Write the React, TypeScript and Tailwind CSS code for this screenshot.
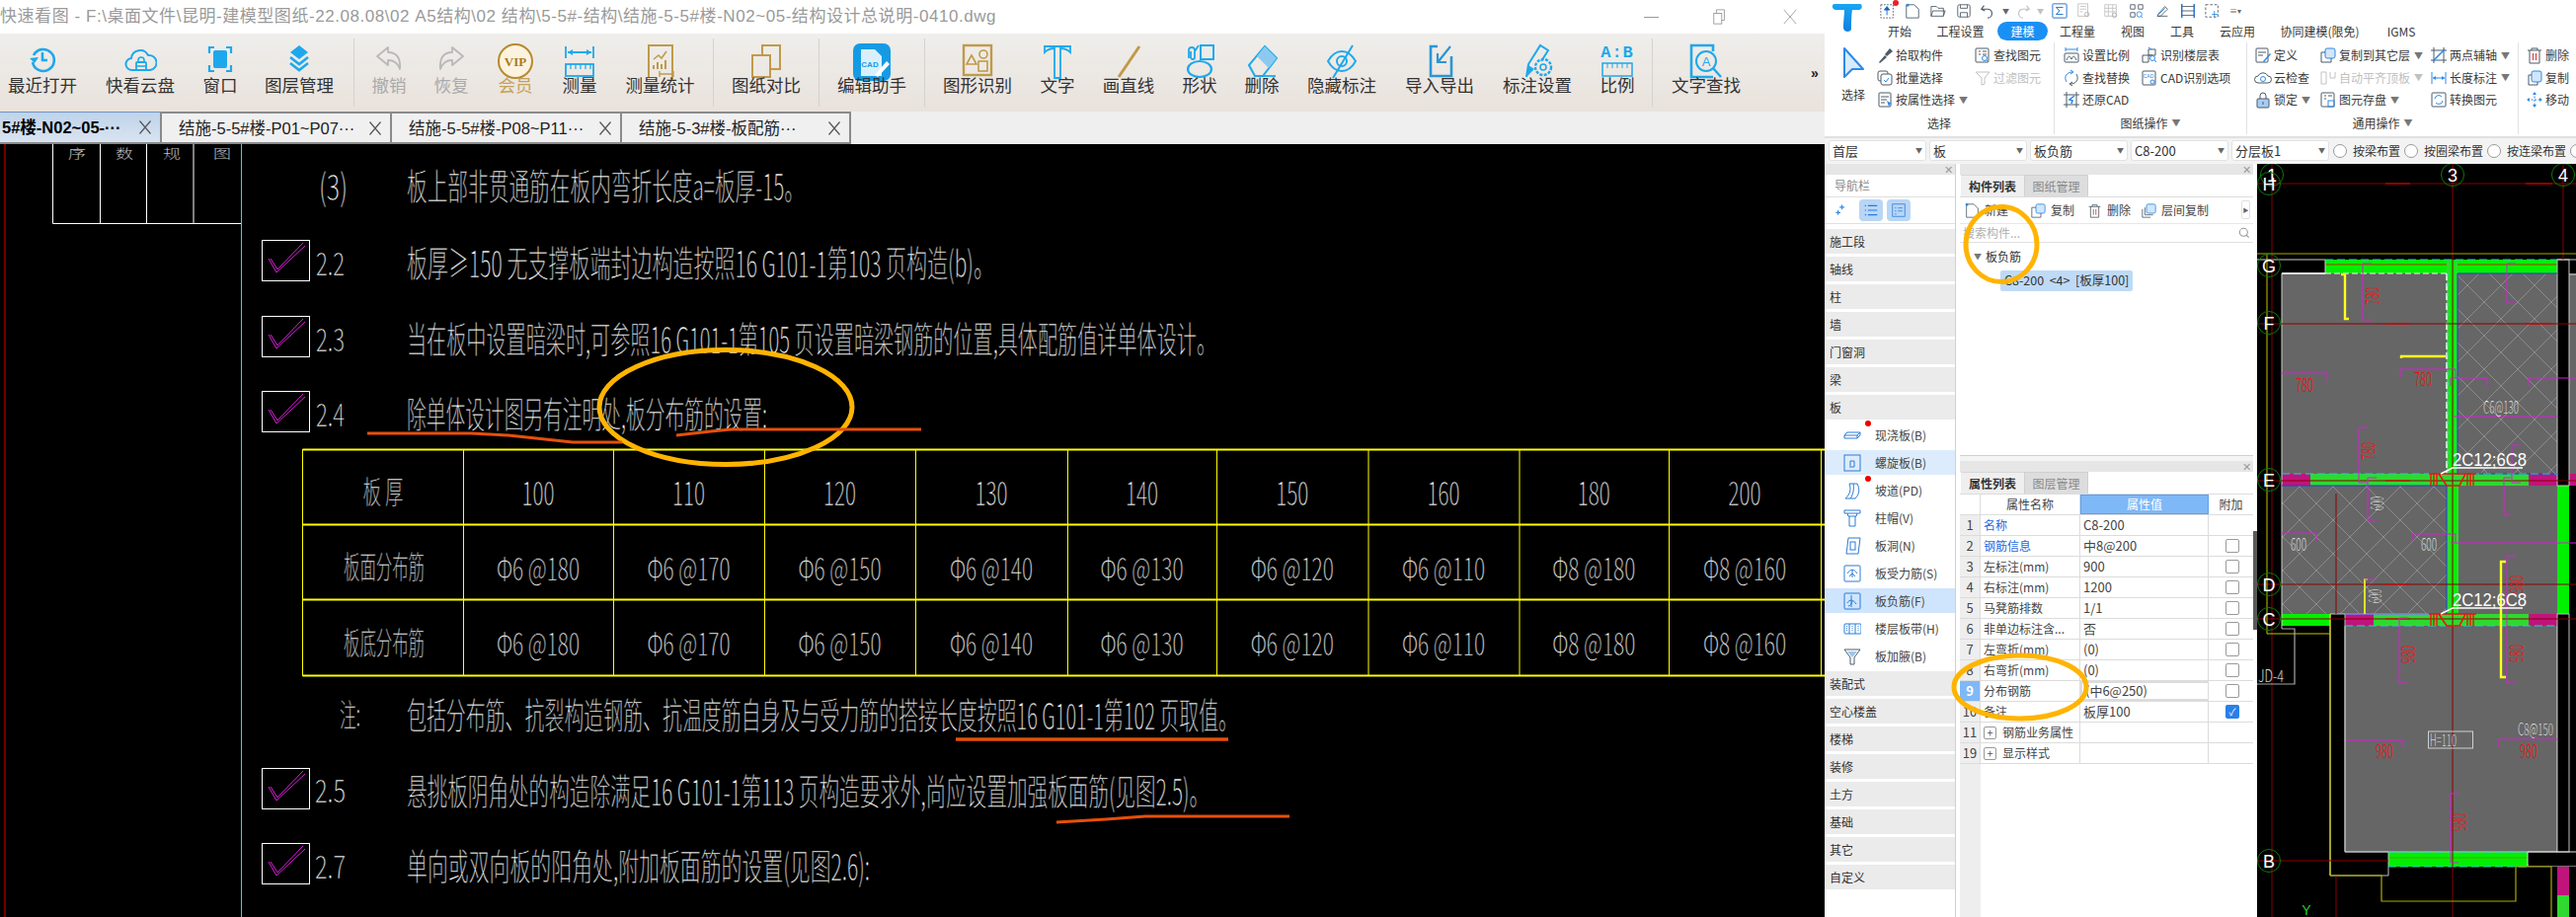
import React from "react";

const BL = "#1ea8ec";
const GD = "#c09a4a";
const ST = "#4d5b68";
const AC = "#2d8ae6";

function Svg({ w = 32, h = 32, vb = "0 0 32 32", children, className = "" }: { w?: number; h?: number; vb?: string; children: React.ReactNode; className?: string }) {
  return (
    <svg width={w} height={h} viewBox={vb} fill="none" className={"block shrink-0 " + className}>
      {children}
    </svg>
  );
}

const toolIcons: Record<string, React.ReactNode> = {
  recent: (
    <Svg>
      <path d="M7 12a11 11 0 1 1-1 7" stroke={BL} strokeWidth="2.6" />
      <path d="M3 15l5 5 4-6z" fill={BL} />
      <path d="M16 9v8h5" stroke={BL} strokeWidth="2.6" />
    </Svg>
  ),
  cloud: (
    <Svg w={34}>
      <path d="M8 27a6 6 0 0 1-1-12 9 9 0 0 1 17-3 7 7 0 0 1 2 15z" stroke={BL} strokeWidth="2" />
      <rect x="12" y="19" width="10" height="8" rx="1" stroke={BL} strokeWidth="1.8" />
      <path d="M14 19v-2a3 3 0 0 1 6 0v2M12 23h10" stroke={BL} strokeWidth="1.6" />
    </Svg>
  ),
  win: (
    <Svg>
      <path d="M5 10V4h5M22 4h5v6M27 22v6h-5M10 28H5v-6" stroke={BL} strokeWidth="2.2" />
      <rect x="9" y="7" width="14" height="18" rx="2" fill={BL} />
    </Svg>
  ),
  layer: (
    <Svg>
      <path d="M16 2l9 7-9 7-9-7z" fill={BL} />
      <path d="M7 14l9 7 9-7M7 20l9 7 9-7" stroke={BL} strokeWidth="2.6" />
    </Svg>
  ),
  undo: (
    <Svg>
      <path d="M4 13L15 4v5c9 0 13 6 12 17-2-6-6-9-12-9v5z" stroke="#b8b8b8" strokeWidth="1.8" strokeLinejoin="round" />
    </Svg>
  ),
  redo: (
    <Svg>
      <path d="M28 13L17 4v5C8 9 4 15 5 26c2-6 6-9 12-9v5z" stroke="#b8b8b8" strokeWidth="1.8" strokeLinejoin="round" />
    </Svg>
  ),
  vip: (
    <Svg w={38} h={36} vb="0 0 38 36">
      <ellipse cx="19" cy="18" rx="17" ry="17" fill="#fbf3df" stroke="#b88a2e" strokeWidth="2" />
      <text x="19" y="23" textAnchor="middle" fontSize="13" fontWeight="700" fontFamily="Liberation Serif, serif" fill="#a97a20">VIP</text>
    </Svg>
  ),
  measure: (
    <Svg w={32} h={36} vb="0 0 32 36">
      <path d="M2 3v12M30 3v12M4 9h24" stroke={BL} strokeWidth="1.8" />
      <path d="M4 9l5-3v6zM28 9l-5-3v6z" fill={BL} />
      <rect x="2" y="21" width="28" height="12" stroke={BL} strokeWidth="1.8" />
      <path d="M7 21v5M12 21v5M17 21v5M22 21v5M27 21v5" stroke={BL} strokeWidth="1.2" />
    </Svg>
  ),
  stat: (
    <Svg w={32} h={36} vb="0 0 32 36">
      <path d="M4 34V2h24v34" stroke={GD} strokeWidth="2" />
      <path d="M9 16l5-4 3 3 5-7" stroke={GD} strokeWidth="1.6" />
      <path d="M9 26v-4M13 26v-7M17 26v-5M21 26v-9" stroke={GD} strokeWidth="2" />
      <path d="M15 31h14M15 28v6M29 28v6" stroke={GD} strokeWidth="1.4" />
    </Svg>
  ),
  compare: (
    <Svg w={32} h={36} vb="0 0 32 36">
      <path d="M12 12V2h18v24H20" stroke={GD} strokeWidth="2" />
      <rect x="2" y="12" width="18" height="22" stroke={GD} strokeWidth="2" />
    </Svg>
  ),
  edit: (
    <Svg w={38} h={38} vb="0 0 38 38">
      <rect x="0" y="0" width="38" height="38" rx="7" fill="#159be4" />
      <path d="M8 6h14l7 7v20H8z" fill="#d9f0fc" />
      <text x="17" y="24" textAnchor="middle" fontSize="8" fontWeight="700" fontFamily="Liberation Sans, sans-serif" fill="#159be4">CAD</text>
      <path d="M22 32l12-14 3 3-12 13z" fill="#fff" />
    </Svg>
  ),
  shape: (
    <Svg h={34} vb="0 0 32 34">
      <rect x="2" y="2" width="28" height="30" stroke={GD} strokeWidth="2.4" />
      <path d="M10 12l-5 9h10z" stroke={GD} strokeWidth="1.6" />
      <ellipse cx="22" cy="11" rx="4" ry="4" stroke={GD} strokeWidth="1.6" />
      <rect x="17" y="18" width="9" height="10" stroke={GD} strokeWidth="1.6" />
    </Svg>
  ),
  text: (
    <Svg h={36} vb="0 0 32 36">
      <path d="M3 9V3h26v6C26 6 22 5 19 5v30h-6V5C10 5 6 6 3 9z" stroke={BL} strokeWidth="1.8" />
    </Svg>
  ),
  line: (
    <Svg h={36} vb="0 0 32 36">
      <path d="M27 3L6 34" stroke={GD} strokeWidth="3" />
    </Svg>
  ),
  form: (
    <Svg h={36} vb="0 0 32 36">
      <rect x="17" y="2" width="13" height="14" stroke={BL} strokeWidth="2" />
      <path d="M5 15V7a3 3 0 0 1 6 0v7a2 2 0 0 1-4 0V8M15 2L11 8" stroke={BL} strokeWidth="1.8" />
      <ellipse cx="16" cy="26" rx="12" ry="8" stroke={BL} strokeWidth="2.2" />
    </Svg>
  ),
  erase: (
    <Svg h={36} vb="0 0 32 36">
      <path d="M3 22L19 3l12 12-14 18H9z" stroke={BL} strokeWidth="2" />
      <path d="M19 3l12 12-8 10-12-12z" fill="#8cc9ee" />
      <path d="M9 33h21" stroke={BL} strokeWidth="1.8" />
    </Svg>
  ),
  eye: (
    <Svg h={36} vb="0 0 32 36">
      <path d="M2 18c4-7 9-10 14-10s10 3 14 10c-4 7-9 10-14 10S6 25 2 18z" stroke={BL} strokeWidth="2" />
      <ellipse cx="16" cy="18" rx="5" ry="5" stroke={BL} strokeWidth="2" />
      <path d="M27 2L7 35" stroke={BL} strokeWidth="2" />
    </Svg>
  ),
  port: (
    <Svg h={36} vb="0 0 32 36">
      <path d="M14 3H7v30h21V13" stroke="#2b95d6" strokeWidth="2.6" />
      <path d="M27 3L15 18M14 10v9h9" stroke="#2b95d6" strokeWidth="2.2" />
    </Svg>
  ),
  set: (
    <Svg h={36} vb="0 0 32 36">
      <path d="M5 34l2-13L19 2l8 5-7 11" stroke={BL} strokeWidth="2" />
      <path d="M5 34l2-12 6 4z" fill={BL} />
      <circle cx="22" cy="24" r="8" stroke={BL} strokeWidth="2.4" strokeDasharray="3 1.4" />
      <circle cx="22" cy="24" r="3" stroke={BL} strokeWidth="1.6" />
    </Svg>
  ),
  ratio: (
    <div className="flex flex-col items-center">
      <span className="font-['Liberation_Mono',monospace] text-[17px] leading-[19px] font-bold text-[#1ea8ec] tracking-[1px]">A:B</span>
      <Svg h={15} vb="0 0 32 15">
        <rect x="1" y="1" width="30" height="13" stroke={BL} strokeWidth="1.5" />
        <path d="M6 1v5M11 1v5M16 1v5M21 1v5M26 1v5" stroke={BL} />
      </Svg>
    </div>
  ),
  find: (
    <Svg w={34} h={36} vb="0 0 34 36">
      <path d="M24 34H2V2h22v6" stroke={BL} strokeWidth="2.6" />
      <circle cx="17" cy="18" r="10" stroke={BL} strokeWidth="2" />
      <path d="M24 25l8 9" stroke={BL} strokeWidth="2.4" />
      <text x="17" y="23" textAnchor="middle" fontSize="13" fontFamily="Liberation Sans, sans-serif" fill={BL}>A</text>
    </Svg>
  ),
};

type Tool = { label: string; w: string; icon: string; dim?: string };
const SEP: Tool = { label: "", w: "", icon: "" };
const tools: Tool[] = [
  { label: "最近打开", w: "w-[86px]", icon: "recent" },
  { label: "快看云盘", w: "w-[112px]", icon: "cloud" },
  { label: "窗口", w: "w-[50px]", icon: "win" },
  { label: "图层管理", w: "w-[110px]", icon: "layer" },
  SEP,
  { label: "撤销", w: "w-[70px]", icon: "undo", dim: "text-[#aaaaaa]" },
  { label: "恢复", w: "w-[56px]", icon: "redo", dim: "text-[#aaaaaa]" },
  { label: "会员", w: "w-[74px]", icon: "vip", dim: "text-[#c4a25a]" },
  { label: "测量", w: "w-[56px]", icon: "measure" },
  { label: "测量统计", w: "w-[107px]", icon: "stat" },
  SEP,
  { label: "图纸对比", w: "w-[106px]", icon: "compare" },
  SEP,
  { label: "编辑助手", w: "w-[106px]", icon: "edit" },
  SEP,
  { label: "图形识别", w: "w-[106px]", icon: "shape" },
  { label: "文字", w: "w-[56px]", icon: "text" },
  { label: "画直线", w: "w-[88px]", icon: "line" },
  { label: "形状", w: "w-[56px]", icon: "form" },
  { label: "删除", w: "w-[70px]", icon: "erase" },
  { label: "隐藏标注", w: "w-[92px]", icon: "eye" },
  { label: "导入导出", w: "w-[106px]", icon: "port" },
  { label: "标注设置", w: "w-[92px]", icon: "set" },
  { label: "比例", w: "w-[70px]", icon: "ratio" },
  SEP,
  { label: "文字查找", w: "w-[108px]", icon: "find" },
];

function Toolbar() {
  return (
    <div className="flex h-[79px] shrink-0 bg-gradient-to-b from-[#efeeeb] to-[#e9e2dc]">
      {tools.map((t, i) =>
        t.label === "" ? (
          <div key={i} className="w-px my-[5px] bg-[#d3d2ce] shrink-0" />
        ) : (
          <div key={i} className={"flex flex-col items-center shrink-0 pt-[10px] " + t.w}>
            <div className="h-[34px] flex items-start justify-center">{toolIcons[t.icon]}</div>
            <div className={"text-[17.5px] leading-[24px] mt-[-3px] whitespace-nowrap " + (t.dim ?? "text-[#333333]")}>{t.label}</div>
          </div>
        )
      )}
      <div className="ml-[52px] pt-[30px] text-[14px] font-bold text-[#222222]">»</div>
    </div>
  );
}

function DocTab({ text, active, w }: { text: string; active?: boolean; w: string }) {
  return (
    <div className={"flex items-center h-full shrink-0 border-r-2 border-b-2 border-[#8a8a8a] " + w + " " + (active ? "bg-gradient-to-b from-[#bfd3ea] to-[#d9e4f1] border-t border-t-[#6f93c4] pl-[2px]" : "border-t-2 bg-[#f0f0f0] pl-[17px]")}>
      <span className={"text-[16.5px] leading-[24px] whitespace-nowrap font-['Liberation_Sans','Noto_Sans_CJK_SC',sans-serif] flex-1 overflow-hidden " + (active ? "font-bold text-black" : "text-[#222222]")}>{text}</span>
      <span className="w-[30px] flex justify-center shrink-0">
        <Svg w={14} h={16} vb="0 0 14 16">
          <path d="M1.5 1.5L12.5 14.5M12.5 1.5L1.5 14.5" stroke="#555555" strokeWidth="1.2" />
        </Svg>
      </span>
    </div>
  );
}

function CT({ x, y, s, len, children, anchor, fill = "#ffffff", thin = 0.6, rot }: { x: number; y: number; s: number; len?: number; children: React.ReactNode; anchor?: "middle" | "start"; fill?: string; thin?: number; rot?: number }) {
  return (
    <text
      x={x}
      y={y}
      fontSize={s}
      fill={fill}
      stroke={thin ? "#000000" : "none"}
      strokeWidth={thin}
      textAnchor={anchor}
      textLength={len}
      lengthAdjust={len ? "spacingAndGlyphs" : undefined}
      transform={rot ? `rotate(${rot} ${x} ${y})` : undefined}
      fontFamily="'Noto Sans CJK SC', 'Liberation Sans', sans-serif"
      fontWeight={300}
    >
      {children}
    </text>
  );
}

function CheckBox({ y }: { y: number }) {
  return (
    <g>
      <rect x="265.5" y={y + 0.5} width="48" height="41" stroke="#ffffff" />
      <path d={`M272 ${y + 19}l8 14 29-27M274 ${y + 19}l7 11 26-27`} stroke="#e020e0" strokeWidth="1" fill="none" />
    </g>
  );
}

const colsX = [306, 469, 621, 774, 927, 1081, 1232, 1385.5, 1538.5, 1690, 1844];
const heads = ["100", "110", "120", "130", "140", "150", "160", "180", "200"];
const vals = ["Φ6 @180", "Φ6 @170", "Φ6 @150", "Φ6 @140", "Φ6 @130", "Φ6 @120", "Φ6 @110", "Φ8 @180", "Φ8 @160"];

function DocCanvas() {
  return (
    <svg viewBox="0 146 1848 783" className="block w-full h-full bg-black">
      <path d="M5 146V929" stroke="#e00000" strokeWidth="1" />
      <path d="M244.5 146V929" stroke="#20e0e0" strokeWidth="1" />
      <path d="M53.5 146V226.5H244M101.5 146V226M148.5 146V226M196 146V226" stroke="#ffffff" fill="none" />
      <CT x={78} y={160} s={13} len={18} anchor="middle" thin={0.2}>序</CT>
      <CT x={126} y={160} s={13} len={18} anchor="middle" thin={0.2}>数</CT>
      <CT x={174} y={160} s={13} len={18} anchor="middle" thin={0.2}>规</CT>
      <CT x={225} y={160} s={13} len={18} anchor="middle" thin={0.2}>图</CT>

      <CT x={323} y={203} s={37} len={29}>(3)</CT>
      <CT x={412} y={203} s={37} len={403}>板上部非贯通筋在板内弯折长度a=板厚-15。</CT>

      <CheckBox y={243} />
      <CT x={320} y={279} s={33} len={29}>2.2</CT>
      <CT x={412} y={281} s={37} len={595}>板厚≥150 无支撑板端封边构造按照16 G101-1第103 页构造(b)。</CT>

      <CheckBox y={320} />
      <CT x={320} y={356} s={33} len={29}>2.3</CT>
      <CT x={412} y={358} s={37} len={820}>当在板中设置暗梁时,可参照16 G101-1第105 页设置暗梁钢筋的位置,具体配筋值详单体设计。</CT>

      <CheckBox y={396} />
      <CT x={320} y={432} s={33} len={29}>2.4</CT>
      <CT x={412} y={434} s={37} len={365}>除单体设计图另有注明处,板分布筋的设置:</CT>

      <g stroke="#ffff00" fill="none">
        <path d="M306.5 455.5H1848M306.5 531.5H1848M306.5 607.5H1848M306.5 684.5H1848" strokeWidth="2" />
        {colsX.map((x) => (
          <path key={x} d={`M${x + 0.5} 455V685`} strokeWidth="1" />
        ))}
      </g>
      <CT x={388} y={510} s={32} len={41} anchor="middle">板 厚</CT>
      {heads.map((h, i) => (
        <CT key={h} x={(colsX[i + 1] + colsX[i + 2]) / 2} y={512} s={34} len={33} anchor="middle">{h}</CT>
      ))}
      <CT x={389} y={586} s={32} len={82} anchor="middle">板面分布筋</CT>
      <CT x={389} y={663} s={32} len={82} anchor="middle">板底分布筋</CT>
      {vals.map((v, i) => (
        <React.Fragment key={i}>
          <CT x={(colsX[i + 1] + colsX[i + 2]) / 2} y={588} s={32} len={84} anchor="middle">{v}</CT>
          <CT x={(colsX[i + 1] + colsX[i + 2]) / 2} y={664} s={32} len={84} anchor="middle">{v}</CT>
        </React.Fragment>
      ))}
      <CT x={344} y={736} s={32} len={21}>注:</CT>
      <CT x={412} y={739} s={37} len={842}>包括分布筋、抗裂构造钢筋、抗温度筋自身及与受力筋的搭接长度按照16 G101-1第102 页取值。</CT>

      <CheckBox y={778} />
      <CT x={319} y={813} s={33} len={31}>2.5</CT>
      <CT x={412} y={816} s={37} len={813}>悬挑板阴角处的构造除满足16 G101-1第113 页构造要求外,尚应设置加强板面筋(见图2.5)。</CT>

      <CheckBox y={854} />
      <CT x={319} y={890} s={33} len={31}>2.7</CT>
      <CT x={412} y={892} s={37} len={469}>单向或双向板的阳角处,附加板面筋的设置(见图2.6):</CT>
    </svg>
  );
}

function Bracket({ d, c = "#d81ed8" }: { d: string; c?: string }) {
  return <path d={d} stroke={c} strokeWidth="1" fill="none" />;
}

function RedBars({ y }: { y: number }) {
  return (
    <g stroke="#f01010" fill="none" strokeWidth="1.4">
      <path d={`M2460 ${y}H2508M2462 ${y}V${y + 12}M2465 ${y}V${y + 12}M2468 ${y}V${y + 12}M2499 ${y}V${y + 12}M2502 ${y}V${y + 12}M2505 ${y}V${y + 12}`} />
      <path d={`M2470 ${y}L2478 ${y + 12}H2491L2497 ${y}`} strokeWidth="1.6" />
      <path d={`M2472 ${y}L2484 ${y - 6}H2555`} stroke="#ffffff" strokeWidth="1.4" />
    </g>
  );
}

function CadCanvas() {
  const bubbles: [string, number, number][] = [
    ["1", 2301, 177], ["3", 2484, 177], ["4", 2596, 177],
    ["H", 2298, 186], ["G", 2298, 269], ["F", 2298, 327],
    ["E", 2298, 486], ["D", 2298, 592], ["C", 2298, 627], ["B", 2298, 872],
  ];
  const g1 = "#00f000";
  const g2 = "#2fd92f";
  const pk = "#c0147d";
  return (
    <svg viewBox="2286 166 323 763" className="block w-full h-full bg-black">
      <defs>
        <pattern id="hatch" width="34" height="34" patternUnits="userSpaceOnUse">
          <path d="M0 0L34 34M34 0L0 34" stroke="#969696" strokeWidth="0.8" />
        </pattern>
      </defs>

      {/* slabs */}
      <rect x="2311" y="277" width="167" height="203" fill="#666666" />
      <rect x="2489" y="277" width="101" height="203" fill="#666666" />
      <rect x="2489" y="277" width="101" height="203" fill="url(#hatch)" />
      <rect x="2602" y="277" width="7" height="203" fill="#666666" />
      <rect x="2311" y="492" width="167" height="130" fill="#666666" />
      <rect x="2311" y="492" width="167" height="130" fill="url(#hatch)" />
      <rect x="2490" y="492" width="100" height="130" fill="#666666" />
      <rect x="2375" y="634" width="215" height="229" fill="#666666" />

      {/* green beams */}
      <rect x="2355" y="263" width="235" height="14" fill={g1} />
      <path d="M2355 268H2590" stroke="#6d7a00" strokeWidth="1.5" />
      <rect x="2478" y="263" width="11" height="229" fill={g2} />
      <rect x="2481" y="263" width="5" height="229" fill={g1} />
      <rect x="2311" y="480" width="291" height="12" fill={g2} />
      <rect x="2311" y="480" width="29" height="12" fill={pk} />
      <rect x="2561" y="480" width="48" height="12" fill={pk} />
      <rect x="2478" y="492" width="12" height="142" fill={g2} />
      <rect x="2482" y="492" width="6" height="142" fill={g1} />
      <rect x="2590" y="492" width="12" height="142" fill={g1} />
      <rect x="2311" y="622" width="49" height="12" fill={g1} />
      <rect x="2375" y="622" width="215" height="12" fill={g2} />
      <rect x="2375" y="622" width="29" height="12" fill={pk} />
      <rect x="2561" y="622" width="29" height="12" fill={pk} />
      <rect x="2419" y="863" width="141" height="15" fill={g1} />
      <path d="M2419 869H2560" stroke="#59a000" strokeWidth="1" />
      <rect x="2590" y="878" width="12" height="29" fill={pk} />
      <rect x="2590" y="907" width="12" height="22" fill={g2} />

      {/* black columns and outlines */}
      <path d="M2286 263H2355V277H2311V637" stroke="#cfcfcf" strokeWidth="1" fill="none" />
      <path d="M2311 277H2355" stroke="#ffffff" strokeWidth="1.5" />
      <rect x="2590" y="263" width="12" height="229" fill="#000000" stroke="#c8c8c8" strokeWidth="1" />
      <path d="M2590 263H2609" stroke="#c8c8c8" />
      <path d="M2602 278H2609" stroke="#c8c8c8" />
      <path d="M2360 622H2375V863H2419V887H2360Z" fill="#000000" stroke="#c0c0c0" strokeWidth="1" />
      <path d="M2375 634V863H2590V634" stroke="#c0c0c0" fill="none" />
      <rect x="2590" y="622" width="12" height="241" fill="#000000" stroke="#c0c0c0" strokeWidth="1" />
      <path d="M2560 863V877H2609M2560 863H2609" stroke="#e0e0e0" fill="none" />
      <rect x="2561" y="864" width="48" height="13" fill="#000000" />
      <path d="M2360 622V887" stroke="#e4e400" />

      {/* blue and cyan edges */}
      <path d="M2489 480V277H2590M2489 480H2590" stroke="#1c3fd0" strokeWidth="1" fill="none" />
      <path d="M2311 492H2478V622" stroke="#1c3fd0" strokeWidth="1" fill="none" />
      <path d="M2375 622H2460" stroke="#7d7df0" strokeWidth="1.5" />
      <path d="M2355 263H2590" stroke="#20d0d0" strokeWidth="1" strokeDasharray="8 4" />
      <path d="M2478 277V480" stroke="#ffffff" strokeWidth="1.4" strokeDasharray="7 3" />
      <path d="M2479 277V480" stroke="#30e0e0" strokeWidth="1" strokeDasharray="3 7" />
      <path d="M2355 277H2478" stroke="#ffffff" strokeWidth="1" strokeDasharray="6 3" />
      <path d="M2311 480H2590M2375 634H2590M2419 863H2560M2419 878H2560" stroke="#20d0d0" strokeWidth="1" strokeDasharray="8 4" />

      {/* axes */}
      <path d="M2286 186H2609M2286 328H2609M2286 487H2609M2286 592H2609M2286 627H2609M2286 872H2419" stroke="#8a0000" strokeWidth="1" />
      <path d="M2301 166V929M2484 166V929M2596 166V263" stroke="#8a0000" strokeWidth="1" />
      <path d="M2366 500V622M2366 887V929" stroke="#8a0000" strokeWidth="1" />
      <path d="M2416 186H2441M2558 186H2585M2416 328H2441M2558 328H2585M2416 487H2441M2416 592H2441M2416 627H2441" stroke="#e00000" strokeWidth="1" />

      {/* yellow outlines */}
      <path d="M2286 257H2609" stroke="#aaaa00" strokeWidth="1" />
      <path d="M2296 257V642H2360" stroke="#c4c400" strokeWidth="1" fill="none" />
      <path d="M2360 887H2412V913H2548V878H2584V929" stroke="#aaaa00" strokeWidth="1.2" fill="none" />
      <path d="M2311 637H2324V693H2286" stroke="#a8a8a8" strokeWidth="1.2" fill="none" />

      {/* rebar */}
      <g stroke="#ffff20" strokeWidth="2.4" fill="none">
        <path d="M2371 278H2375V323H2379" />
        <path d="M2432 363V361H2477" />
        <path d="M2538 569H2533V686H2538" />
        <path d="M2395 622V587H2398" strokeWidth="1.6" />
      </g>
      <Bracket d="M2402 267H2393V324H2402" />
      <Bracket d="M2548 267H2539V307H2548" />
      <Bracket d="M2311 378H2357V387" />
      <Bracket d="M2431 383V374H2487V383" />
      <Bracket d="M2482 391V383H2519V391" />
      <Bracket d="M2561 391V383H2609" />
      <Bracket d="M2484 422H2590" />
      <Bracket d="M2398 433H2389V489H2398" />
      <Bracket d="M2553 451H2544V489H2553" />
      <Bracket d="M2543 484H2536V522H2543" />
      <Bracket d="M2407 484H2398V528H2407" />
      <Bracket d="M2311 540H2346V548" />
      <Bracket d="M2443 549V541H2487V550" />
      <Bracket d="M2482 550H2609" />
      <Bracket d="M2548 563H2539V692H2548" />
      <Bracket d="M2439 626H2430V692H2439" />
      <Bracket d="M2376 750H2434V758" />
      <Bracket d="M2531 757V749H2590" />
      <Bracket d="M2490 804H2482V874H2490" />
      <Bracket d="M2395 587H2405" />

      <RedBars y={480} />
      <RedBars y={622} />

      {/* labels */}
      <CT x={2410} y={300} s={20} len={18} anchor="middle" fill="#ee1111" thin={0} rot={-90}>780</CT>
      <CT x={2334} y={397} s={20} len={18} anchor="middle" fill="#ee1111" thin={0}>780</CT>
      <CT x={2454} y={391} s={20} len={18} anchor="middle" fill="#ee1111" thin={0}>780</CT>
      <CT x={2406} y={457} s={20} len={18} anchor="middle" fill="#ee1111" thin={0} rot={-90}>780</CT>
      <CT x={2556} y={592} s={20} len={18} anchor="middle" fill="#ee1111" thin={0} rot={-90}>980</CT>
      <CT x={2556} y={662} s={20} len={18} anchor="middle" fill="#ee1111" thin={0} rot={-90}>980</CT>
      <CT x={2446} y={663} s={20} len={18} anchor="middle" fill="#ee1111" thin={0} rot={-90}>980</CT>
      <CT x={2415} y={768} s={19} len={18} anchor="middle" fill="#ee1111" thin={0}>980</CT>
      <CT x={2561} y={768} s={19} len={18} anchor="middle" fill="#ee1111" thin={0}>980</CT>
      <CT x={2498} y={833} s={20} len={18} anchor="middle" fill="#ee1111" thin={0} rot={-90}>980</CT>

      <CT x={2533} y={419} s={18} len={36} anchor="middle" thin={0.2}>C6@130</CT>
      <CT x={2568} y={745} s={17} len={36} anchor="middle" thin={0.2}>C8@150</CT>
      <CT x={2414} y={510} s={18} len={14} anchor="middle" thin={0.2} rot={-90}>600</CT>
      <CT x={2412} y={604} s={18} len={14} anchor="middle" thin={0.2} rot={-90}>600</CT>
      <CT x={2328} y={558} s={18} len={16} anchor="middle" thin={0.2}>600</CT>
      <CT x={2460} y={558} s={18} len={16} anchor="middle" thin={0.2}>600</CT>
      <text x="2484" y="472" fontSize="19" fill="#ffffff" fontFamily="Liberation Sans, sans-serif" textLength={75} lengthAdjust="spacingAndGlyphs">2C12;6C8</text>
      <text x="2484" y="614" fontSize="19" fill="#ffffff" fontFamily="Liberation Sans, sans-serif" textLength={75} lengthAdjust="spacingAndGlyphs">2C12;6C8</text>
      <rect x="2459.5" y="741" width="45" height="17" stroke="#d0d0d0" fill="none" />
      <CT x={2461} y={756} s={17} len={27} thin={0.2}>H=110</CT>
      <CT x={2287} y={691} s={17} len={26} thin={0.2}>JD-4</CT>
      <text x="2336" y="927" fontSize="14" fill="#20d020" textAnchor="middle" fontFamily="Liberation Sans, sans-serif">Y</text>

      {bubbles.map(([t, x, y]) => (
        <g key={t}>
          <circle cx={x} cy={y} r="11.5" stroke="#0b7a0b" strokeWidth="1" fill="none" />
          <text x={x} y={y + 6.5} fontSize="18" textAnchor="middle" fill="#ffffff" fontFamily="Liberation Sans, sans-serif">{t}</text>
        </g>
      ))}
    </svg>
  );
}

function Ico({ children, w = 18, h = 18 }: { children: React.ReactNode; w?: number; h?: number }) {
  return <Svg w={w} h={h} vb="0 0 18 18">{children}</Svg>;
}

const rib: Record<string, React.ReactNode> = {
  pick: <Ico><path d="M3 16l6-7 2 2-7 6zM9 8l5-6 3 3-6 5z" fill={ST} /></Ico>,
  batch: <Ico><rect x="2" y="2" width="10" height="10" rx="2" stroke={ST} /><rect x="5" y="5" width="11" height="11" rx="2" stroke={ST} fill="#fff" /><path d="M8 11l2 2 3-4" stroke={AC} /></Ico>,
  attr: <Ico><rect x="3" y="2" width="12" height="14" rx="1" stroke={ST} /><path d="M5 6h8M5 9h6M5 12h4" stroke={ST} /><path d="M11 10l5 3-2 1-1 2z" fill={AC} /></Ico>,
  search: <Ico><rect x="2" y="2" width="13" height="14" rx="1" stroke={ST} /><path d="M5 5h2M9 5h4M5 8h2M9 8h4" stroke={ST} /><circle cx="11" cy="12" r="2.5" stroke={AC} /><path d="M13 14l2 2" stroke={AC} /></Ico>,
  filter: <Ico><path d="M2 3h14l-5 6v6l-3 1V9z" stroke="#c2c2c2" /></Ico>,
  scale: <Ico><path d="M3 3h12M3 1v4M15 1v4" stroke={AC} /><rect x="2" y="7" width="14" height="9" rx="1" stroke={ST} /><path d="M4 14c2-5 3-5 5-1 2-4 3-4 5 1" stroke={ST} /></Ico>,
  floor: <Ico><path d="M2 9h6v7H2zM8 3h7v6H8zM8 9h4" stroke={ST} /><circle cx="12" cy="12" r="2.5" stroke={AC} /><path d="M14 14l2 2M8 1l3 2" stroke={AC} /></Ico>,
  replace: <Ico><path d="M4 13C1 8 4 3 10 3M8 1l3 2-3 2" stroke={AC} /><path d="M14 5c3 5 0 10-6 10M10 17l-3-2 3-2" stroke={ST} /></Ico>,
  cadopt: <Ico><rect x="2" y="2" width="13" height="14" rx="1" stroke={ST} /><text x="8" y="9" fontSize="5" textAnchor="middle" fill={AC} fontFamily="Liberation Sans, sans-serif">CAD</text><circle cx="12" cy="13" r="2" stroke={AC} /></Ico>,
  restore: <Ico><path d="M4 1v16M14 1v16M1 4h16M1 14h16" stroke={ST} /><path d="M12 5L7 9l3 1-1 3" stroke={AC} strokeWidth="1.6" /></Ico>,
  define: <Ico><rect x="2" y="2" width="12" height="14" rx="1" stroke={ST} /><path d="M4 6h8M4 9h5" stroke={ST} /><path d="M9 15l7-8 1 1-7 8z" fill={AC} /></Ico>,
  cloud: <Ico><path d="M4 14a3.5 3.5 0 0 1 0-7 5.5 5.5 0 0 1 10 0 3.5 3.5 0 0 1 0 7z" stroke={ST} /><circle cx="9" cy="10" r="2.5" stroke={AC} /></Ico>,
  lock: <Ico><rect x="3" y="8" width="12" height="9" rx="1" fill="#a7cdf2" stroke={ST} /><path d="M6 8V5a3 3 0 0 1 6 0v3" stroke={ST} /><path d="M9 11v3" stroke={ST} /></Ico>,
  copy: <Ico><rect x="6" y="2" width="10" height="10" rx="2" stroke={AC} fill="#d3e6fa" /><path d="M6 6H2v10h10v-4" stroke={ST} /></Ico>,
  align: <Ico><path d="M2 3v12h5V3zM11 3v6h5V3" stroke="#c2c2c2" /></Ico>,
  store: <Ico><rect x="2" y="2" width="13" height="14" rx="1" stroke={ST} /><path d="M5 5h2M9 5h4M5 8h2" stroke={ST} /><rect x="9" y="10" width="6" height="6" stroke={AC} /></Ico>,
  axis: <Ico><path d="M4 1v16M14 1v16M1 4h16M1 14h16" stroke={ST} /><path d="M3 15L15 3" stroke={AC} strokeWidth="1.6" /></Ico>,
  length: <Ico><path d="M2 3v12M16 3v12M3 9h12" stroke={AC} /><path d="M3 9l3-2v4zM15 9l-3-2v4z" fill={AC} /></Ico>,
  convert: <Ico><rect x="2" y="2" width="14" height="14" rx="1" stroke={ST} /><path d="M5 8a4 4 0 0 1 7-2M13 10a4 4 0 0 1-7 2" stroke={AC} /></Ico>,
  del: <Ico><path d="M2 4h14M6 4V2h6v2M4 4v13h10V4" stroke={ST} /><path d="M7.5 7v7M10.5 7v7" stroke="#e03131" /></Ico>,
  dup: <Ico><rect x="6" y="2" width="10" height="11" rx="2" stroke={AC} fill="#d3e6fa" /><path d="M6 6H3v10h9v-3" stroke={ST} /></Ico>,
  move: <Ico><path d="M9 2v14M2 9h14" stroke={AC} strokeDasharray="2 1.5" /><path d="M9 1l-2 3h4zM9 17l-2-3h4zM1 9l3-2v4zM17 9l-3-2v4z" fill={AC} /></Ico>,
};

function RibItem({ n, t, caret, off }: { n: string; t: string; caret?: boolean; off?: boolean }) {
  return (
    <div className="flex items-center h-[22.5px] whitespace-nowrap">
      <span className="w-[18px] flex justify-center">{rib[n]}</span>
      <span className={"ml-[2px] text-[12px] leading-none " + (off ? "text-[#c0c0c0]" : "text-[#3a3a3a]")}>{t}</span>
      {caret && <span className={"ml-[4px] text-[9px] " + (off ? "text-[#c0c0c0]" : "text-[#777777]")}>▼</span>}
    </div>
  );
}

function RibGroup({ w, title, caret, children }: { w: string; title?: string; caret?: boolean; children: React.ReactNode }) {
  return (
    <div className={"flex flex-col shrink-0 border-r border-[#e2e2e2] my-[2px] " + w}>
      <div className="flex pt-[2px] h-[72px]">{children}</div>
      {title && (
        <div className="h-[22px] mt-[1px] flex items-center justify-center text-[12px] text-[#3a3a3a]">
          {title}
          {caret && <span className="ml-[4px] text-[9px] text-[#777777]">▼</span>}
        </div>
      )}
    </div>
  );
}

function Ribbon() {
  return (
    <div className="flex h-[99px] shrink-0 bg-white border-b-2 border-[#e0e0e0]">
      <RibGroup w="w-[233px]" title="选择">
        <div className="w-[52px] flex flex-col items-center pl-[6px] pt-[2px]">
          <Svg w={24} h={32} vb="0 0 24 32">
            <path d="M3 2l19 21H11l-8 8z" fill="#d8ebfb" stroke={AC} strokeWidth="2" strokeLinejoin="round" />
          </Svg>
          <span className="text-[12px] text-[#3a3a3a] mt-[8px]">选择</span>
        </div>
        <div className="w-[99px]">
          <RibItem n="pick" t="拾取构件" />
          <RibItem n="batch" t="批量选择" />
          <RibItem n="attr" t="按属性选择" caret />
        </div>
        <div>
          <RibItem n="search" t="查找图元" />
          <RibItem n="filter" t="过滤图元" off />
        </div>
      </RibGroup>
      <RibGroup w="w-[195px]" title="图纸操作" caret>
        <div className="w-[79px] ml-[8px]">
          <RibItem n="scale" t="设置比例" />
          <RibItem n="replace" t="查找替换" />
          <RibItem n="restore" t="还原CAD" />
        </div>
        <div>
          <RibItem n="floor" t="识别楼层表" />
          <RibItem n="cadopt" t="CAD识别选项" />
        </div>
      </RibGroup>
      <RibGroup w="w-[275px]" title="通用操作" caret>
        <div className="w-[66px] ml-[7px]">
          <RibItem n="define" t="定义" />
          <RibItem n="cloud" t="云检查" />
          <RibItem n="lock" t="锁定" caret />
        </div>
        <div className="w-[112px]">
          <RibItem n="copy" t="复制到其它层" caret />
          <RibItem n="align" t="自动平齐顶板" caret off />
          <RibItem n="store" t="图元存盘" caret />
        </div>
        <div>
          <RibItem n="axis" t="两点辅轴" caret />
          <RibItem n="length" t="长度标注" caret />
          <RibItem n="convert" t="转换图元" />
        </div>
      </RibGroup>
      <div className="pl-[7px] pt-[4px] overflow-hidden flex-1">
        <RibItem n="del" t="删除" />
        <RibItem n="dup" t="复制" />
        <RibItem n="move" t="移动" />
      </div>
    </div>
  );
}

const qIcons: { w: string; el: React.ReactNode }[] = [
  { w: "w-[24px]", el: <div className="relative"><Ico h={20} w={16}><rect x="1" y="2" width="14" height="15" stroke={ST} strokeDasharray="2 1.5" /><path d="M8 14V6M5 8l3-4 3 4z" stroke="#1366c8" fill="#1366c8" /></Ico><span className="absolute right-[-3px] top-[-1px] w-[6px] h-[6px] rounded-full bg-[#ee1c25]" /></div> },
  { w: "w-[25px]", el: <Ico w={16} h={20}><path d="M2 2h9l5 5v10H2z" stroke={ST} /><path d="M2 1h3v3H2z" fill={AC} /></Ico> },
  { w: "w-[27px]", el: <Ico w={16} h={20}><path d="M1 15V4h6l2 2h6v9zM1 15l2-6h14l-2 6" stroke={ST} /></Ico> },
  { w: "w-[25px]", el: <Ico w={16} h={20}><rect x="2" y="2" width="14" height="14" rx="2" stroke={ST} /><path d="M5 2v4h8V2M5 16v-5h8v5" stroke={ST} /></Ico> },
  { w: "w-[24px]", el: <Ico w={16} h={20}><path d="M5 3L2 7l4 2M2 7h7a5 5 0 0 1 0 10" stroke={ST} strokeWidth="1.3" /></Ico> },
  { w: "w-[13px]", el: <span className="text-[7px] text-[#666666]">▼</span> },
  { w: "w-[22px]", el: <Ico w={16} h={20}><path d="M13 3l3 4-4 2M16 7H9a5 5 0 0 0 0 10" stroke="#c2c2c2" strokeWidth="1.3" /></Ico> },
  { w: "w-[13px]", el: <span className="text-[7px] text-[#c0c0c0]">▼</span> },
  { w: "w-[25px]", el: <Ico w={16} h={20}><rect x="1" y="1" width="16" height="16" rx="1" stroke="#1366c8" /><path d="M13 5H5l4 4-4 4h8" stroke="#1366c8" /></Ico> },
  { w: "w-[26px]", el: <Ico w={16} h={20}><rect x="2" y="1" width="11" height="14" stroke="#c2c2c2" /><path d="M4 4h7M4 7h7M4 10h3" stroke="#c2c2c2" /><circle cx="12" cy="13" r="2.5" stroke="#b0b0b0" /></Ico> },
  { w: "w-[27px]", el: <Ico w={16} h={20}><path d="M2 2h13v13H2zM2 6h13M2 10h13M6 2v13M11 2v13" stroke="#c2c2c2" /><circle cx="13" cy="14" r="2.5" stroke="#b0b0b0" /></Ico> },
  { w: "w-[26px]", el: <Ico w={16} h={20}><path d="M2 2h5v5H2zM11 2h5v5h-5zM2 11h5v5H2z" stroke={ST} /><circle cx="12" cy="13" r="3" stroke={AC} /><path d="M14 15l2 2" stroke={AC} /></Ico> },
  { w: "w-[26px]", el: <Ico w={16} h={20}><path d="M3 15h12M4 13l8-9 3 3-8 8H4z" stroke={ST} /><path d="M5 13l7-7" stroke={AC} /></Ico> },
  { w: "w-[25px]", el: <Ico w={16} h={20}><path d="M2 1v16M16 1v16" stroke="#1366c8" strokeWidth="1.5" /><path d="M2 4h14M2 9h14M2 14h14" stroke={ST} /></Ico> },
  { w: "w-[26px]", el: <Ico w={16} h={20}><rect x="1" y="2" width="14" height="14" stroke={ST} strokeDasharray="3 2" /><path d="M11 9v7M8 13h7" stroke={AC} /></Ico> },
  { w: "w-[20px]", el: <span className="text-[8px] text-[#666666] leading-none">≡▾</span> },
];

const appTabs = [
  ["开始", "w-[48px]"], ["工程设置", "w-[75px]"], ["建模", "w-[51px]"], ["工程量", "w-[60px]"], ["视图", "w-[52px]"],
  ["工具", "w-[48px]"], ["云应用", "w-[64px]"], ["协同建模(限免)", "w-[103px]"], ["IGMS", "w-[62px]"],
];

function Sel({ t }: { t: string }) {
  return (
    <div className="flex items-center justify-between w-[99px] h-[21px] bg-white border border-[#e2e2e2] rounded-[3px] px-[3px] text-[13px] text-[#333333] shrink-0">
      {t}
      <span className="text-[7px] text-[#666666]">▼</span>
    </div>
  );
}

function Radio() {
  return <span className="w-[14px] h-[14px] rounded-full border border-[#9a9a9a] bg-white shrink-0" />;
}

const navTop = ["施工段", "轴线", "柱", "墙", "门窗洞", "梁", "板"];
const navBot = ["装配式", "空心楼盖", "楼梯", "装修", "土方", "基础", "其它", "自定义"];
const B = "#2a7ad8";
const subs: { t: string; dot?: boolean; bg?: string; ic: React.ReactNode }[] = [
  { t: "现浇板(B)", dot: true, ic: <Ico><path d="M1 9l3-3h13v3l-3 3H1zM1 9h13v3M14 9l3-3" stroke={B} /></Ico> },
  { t: "螺旋板(B)", bg: "bg-[#ddecfc]", ic: <Ico><rect x="1" y="1" width="16" height="16" stroke={B} /><path d="M7 12V7h4v6H6" stroke={B} /></Ico> },
  { t: "坡道(PD)", dot: true, ic: <Ico><path d="M2 17c5-4 6-10 4-15h8c3 6 2 11-2 15z" stroke={B} /><path d="M7 17c3-4 4-10 3-15" stroke={B} /></Ico> },
  { t: "柱帽(V)", ic: <Ico><path d="M1 1h16v3H1zM4 4l1 3h8l1-3M6 7v10h6V7" stroke={B} /></Ico> },
  { t: "板洞(N)", ic: <Ico><path d="M3 17L5 1h12l-2 16z" stroke={B} /><rect x="7" y="5" width="5" height="8" stroke={B} /></Ico> },
  { t: "板受力筋(S)", ic: <Ico><rect x="1" y="1" width="16" height="16" rx="1" stroke={B} /><path d="M4 9c3-5 7-5 10 0M9 5v8M6 12l3-3 3 3" stroke={B} /></Ico> },
  { t: "板负筋(F)", bg: "bg-[#cfe5fd]", ic: <Ico><rect x="1" y="1" width="16" height="16" rx="1" stroke={B} /><path d="M8 3v12M4 11c2-4 6-4 9 1M5 14c2 0 4-3 4-5" stroke={B} /></Ico> },
  { t: "楼层板带(H)", ic: <Ico><rect x="1" y="4" width="17" height="10" rx="1" stroke={B} /><path d="M6 4v10M12 4v10" stroke={B} /><path d="M3.5 6v6M9 6v6M15 6v6" stroke={B} strokeDasharray="1 1" /></Ico> },
  { t: "板加腋(B)", ic: <Ico><path d="M1 2h16L11 10v7H7v-7z" stroke={ST} /><path d="M4 4h10L9 10z" fill="#9bc7f2" /></Ico> },
];

function NavRow({ t }: { t: string }) {
  return <div className="h-[25px] mb-[3px] bg-[#ebebeb] pl-[5px] flex items-center text-[12px] text-[#333333] shrink-0">{t}</div>;
}

function Nav() {
  return (
    <div className="w-[133px] shrink-0 border-r border-[#d0d0d0] bg-white flex flex-col">
      <div className="h-[11px] bg-[#e6e6e6] relative shrink-0">
        <span className="absolute right-[2px] top-[-2px] text-[11px] leading-[14px] text-[#9a9a9a]">✕</span>
      </div>
      <div className="h-[23px] pl-[10px] flex items-center text-[12px] text-[#8a8a8a] border-b border-[#e0e0e0] shrink-0">导航栏</div>
      <div className="h-[27px] flex items-center gap-[4px] pl-[9px] border-b border-[#e0e0e0] shrink-0">
        <span className="w-[22px] flex justify-start">
          <Ico w={14} h={14}><path d="M3 12h6M6 9v6M11 2v6M8 5h6" stroke={AC} strokeWidth="1.5" /></Ico>
        </span>
        <span className="w-[24px] h-[22px] rounded-[4px] bg-[#b8d6f5] flex items-center justify-center">
          <Ico w={16} h={14}><path d="M5 3h12M5 9h12M5 15h12M1 3h1.5M1 9h1.5M1 15h1.5" stroke={B} strokeWidth="1.4" /></Ico>
        </span>
        <span className="w-[24px] h-[22px] rounded-[4px] bg-[#b8d6f5] flex items-center justify-center">
          <Ico w={16} h={14}><rect x="1" y="1" width="16" height="16" stroke={B} /><path d="M4 6h2M8 6h6M4 10h2M8 10h6M4 14h2" stroke={B} /></Ico>
        </span>
      </div>
      <div className="pt-[5px] flex flex-col">
        {navTop.map((t) => <NavRow key={t} t={t} />)}
      </div>
      <div className="flex flex-col">
        {subs.map((s) => (
          <div key={s.t} className={"relative h-[25px] mb-[3px] flex items-center pl-[19px] gap-[14px] text-[12px] text-[#444444] shrink-0 " + (s.bg ?? "")}>
            {s.ic}
            {s.t}
            {s.dot && <span className="absolute left-[41px] top-[-2px] w-[6px] h-[6px] rounded-full bg-[#f00000]" />}
          </div>
        ))}
      </div>
      <div className="flex flex-col">
        {navBot.map((t) => <NavRow key={t} t={t} />)}
      </div>
    </div>
  );
}

function PanelTabs({ a, b }: { a: string; b: string }) {
  return (
    <>
      <div className="h-[11px] bg-[#e6e6e6] relative shrink-0">
        <span className="absolute right-[2px] top-[-2px] text-[11px] leading-[14px] text-[#9a9a9a]">✕</span>
      </div>
      <div className="flex h-[23px] border-b border-[#dcdcdc] shrink-0 pl-px">
        <div className="w-[64px] bg-[#efefef] border-t border-[#d8d8d8] flex items-center justify-center text-[12px] font-bold text-[#333333]">{a}</div>
        <div className="w-[65px] bg-[#dddddd] border-t border-x border-[#d0d0d0] flex items-center justify-center text-[12px] text-[#8a8a8a]">{b}</div>
      </div>
    </>
  );
}

function TB({ ic, t, w }: { ic: React.ReactNode; t: string; w: string }) {
  return (
    <div className={"flex items-center gap-[5px] text-[12px] text-[#444444] shrink-0 " + w}>
      {ic}
      {t}
    </div>
  );
}

const props: { n: string; name: string; val: string; link?: boolean; box?: boolean; on?: boolean; sel?: boolean; plus?: boolean }[] = [
  { n: "1", name: "名称", val: "C8-200", link: true },
  { n: "2", name: "钢筋信息", val: "中8@200", link: true, box: true },
  { n: "3", name: "左标注(mm)", val: "900", box: true },
  { n: "4", name: "右标注(mm)", val: "1200", box: true },
  { n: "5", name: "马凳筋排数", val: "1/1", box: true },
  { n: "6", name: "非单边标注含...", val: "否", box: true },
  { n: "7", name: "左弯折(mm)", val: "(0)", box: true },
  { n: "8", name: "右弯折(mm)", val: "(0)", box: true },
  { n: "9", name: "分布钢筋", val: "(中6@250)", box: true, sel: true },
  { n: "10", name: "备注", val: "板厚100", box: true, on: true },
  { n: "11", name: "钢筋业务属性", val: "", plus: true },
  { n: "19", name: "显示样式", val: "", plus: true },
];

function PropRow({ p }: { p: (typeof props)[number] }) {
  return (
    <div className="flex h-[21px] border-b border-[#dcdcdc] text-[12px] text-[#444444] shrink-0">
      <div className={"w-[21px] flex items-center justify-center border-r border-[#dcdcdc] text-[13px] shrink-0 " + (p.sel ? "bg-[#7fb8f7] text-white font-bold" : "bg-[#eeeeee]")}>{p.n}</div>
      <div className={"w-[101px] flex items-center pl-[3px] gap-[6px] border-r border-[#dcdcdc] whitespace-nowrap shrink-0 " + (p.link ? "text-[#2368e0]" : "")}>
        {p.plus && <span className="w-[13px] h-[13px] border border-[#999999] rounded-[2px] text-[11px] leading-[11px] text-center text-[#555555] shrink-0">+</span>}
        {p.name}
      </div>
      <div className={"w-[130px] flex items-center pl-[3px] text-[13px] border-r border-[#dcdcdc] shrink-0 " + (p.sel ? "border-2 border-[#777777]" : "")}>{p.val}</div>
      <div className="flex-1 flex items-center justify-center pl-[3px]">
        {p.box && (
          p.on ? (
            <span className="w-[14px] h-[14px] rounded-[2px] bg-[#2a7fe8] flex items-center justify-center text-white text-[10px] leading-none">✓</span>
          ) : (
            <span className="w-[14px] h-[14px] rounded-[2px] border border-[#9a9a9a] bg-white" />
          )
        )}
      </div>
    </div>
  );
}

function CenterCol() {
  return (
    <div className="w-[297px] shrink-0 flex flex-col bg-white">
      <div className="h-[296px] shrink-0 border-b border-[#d0d0d0] flex flex-col">
        <PanelTabs a="构件列表" b="图纸管理" />
        <div className="h-[27px] flex items-center pl-[5px] border-b border-[#e8e8e8] shrink-0 relative">
          <TB w="w-[67px]" t="新建" ic={<Ico w={15} h={15}><path d="M2 1h9l5 5v11H2z" stroke={ST} /><path d="M1 0h3v3H1z" fill={AC} /></Ico>} />
          <TB w="w-[57px]" t="复制" ic={<Ico w={15} h={15}><rect x="6" y="1" width="11" height="11" rx="2" stroke={AC} fill="#d3e6fa" /><path d="M6 5H1v12h11v-5" stroke={ST} /></Ico>} />
          <TB w="w-[55px]" t="删除" ic={<Ico w={15} h={15}><path d="M2 4h14M6 4V2h6v2M4 4v13h10V4" stroke={ST} /><path d="M7.5 7v7M10.5 7v7" stroke="#e03131" /></Ico>} />
          <TB w="w-[90px]" t="层间复制" ic={<Ico w={15} h={15}><rect x="6" y="1" width="11" height="11" rx="2" stroke={AC} fill="#d3e6fa" /><path d="M4 5v9h10M1 7v10h10" stroke={ST} /></Ico>} />
          <span className="absolute right-[3px] top-[3px] w-[9px] h-[19px] border border-[#e0e0e0] rounded-[2px] text-[6px] leading-[17px] text-center text-[#666666]">▶</span>
        </div>
        <div className="h-[19px] flex items-center justify-between px-[3px] text-[12px] text-[#b0b0b0] border-b border-[#e0e0e0] shrink-0">
          搜索构件...
          <Ico w={12} h={12}><circle cx="8" cy="8" r="6" stroke="#999999" strokeWidth="1.6" /><path d="M12 12l4 4" stroke="#999999" strokeWidth="1.6" /></Ico>
        </div>
        <div className="h-[28px] flex items-center pl-[14px] gap-[4px] text-[12px] text-[#333333]">
          <span className="text-[8px] text-[#777777]">▼</span>
          板负筋
        </div>
        <div className="ml-[41px] w-[134px] h-[21px] rounded-[2px] bg-[#bfdaf6] flex items-center pl-[4px] text-[12.5px] text-[#333333] whitespace-pre">C8-200  &lt;4&gt;  [板厚100]</div>
      </div>
      <div className="h-[5px] bg-[#f4f4f4] shrink-0" />
      <div className="flex-1 flex flex-col min-h-0">
        <PanelTabs a="属性列表" b="图层管理" />
        <div className="flex h-[21px] border-b border-[#dcdcdc] text-[12px] text-[#444444] shrink-0">
          <div className="w-[21px] border-r border-[#dcdcdc] shrink-0" />
          <div className="w-[101px] flex items-center justify-center border-r border-[#dcdcdc] shrink-0">属性名称</div>
          <div className="w-[130px] flex items-center justify-center bg-[#7fb8f7] text-white border border-[#5e9fe8] shrink-0">属性值</div>
          <div className="flex-1 flex items-center justify-center">附加</div>
        </div>
        {props.map((p) => <PropRow key={p.n} p={p} />)}
        <div className="flex-1 w-[21px] bg-[#eeeeee]" />
      </div>
    </div>
  );
}

function Overlay() {
  const Y = "#ffb400";
  const O = "#e6500a";
  return (
    <svg className="absolute inset-0 pointer-events-none" width={2609} height={929} viewBox="0 0 2609 929" fill="none">
      <ellipse cx="735" cy="412.5" rx="128" ry="58" stroke={Y} strokeWidth="5" />
      <ellipse cx="2027" cy="247.5" rx="36" ry="38" stroke={Y} strokeWidth="5" />
      <ellipse cx="2046" cy="696" rx="67" ry="32" stroke={Y} strokeWidth="5" />
      <path d="M372 439H477L515 441L580 448H630" stroke={O} strokeWidth="3" />
      <path d="M685 441L720 437L740 435H933" stroke={O} strokeWidth="3" />
      <path d="M968 749H1244" stroke={O} strokeWidth="3.5" />
      <path d="M1070 833L1120 830L1160 827H1306" stroke={O} strokeWidth="3" />
    </svg>
  );
}

export default function App() {
  return (
    <div className="relative flex w-[2609px] h-[929px] overflow-hidden bg-white font-['Liberation_Sans','Noto_Sans_CJK_SC',sans-serif]">
      <div className="w-[1848px] shrink-0 flex flex-col">
        <div className="h-[34px] shrink-0 bg-white flex items-center justify-between">
          <span className="text-[17px] tracking-[0.55px] text-[#9a9a9a] whitespace-nowrap">快速看图 - F:\桌面文件\昆明-建模型图纸-22.08.08\02 A5结构\02 结构\5-5#-结构\结施-5-5#楼-N02~05-结构设计总说明-0410.dwg</span>
          <div className="flex items-center pr-[27px]">
            <span className="w-[15px] h-px bg-[#999999] mr-[54px]" />
            <Ico w={16} h={18}><rect x="2" y="5" width="9" height="12" stroke="#999999" /><path d="M5 5V1h9v12h-3" stroke="#999999" /></Ico>
            <span className="ml-[55px]">
              <Ico w={16} h={18}><path d="M2 1l14 16M16 1L2 17" stroke="#999999" /></Ico>
            </span>
          </div>
        </div>
        <Toolbar />
        <div className="h-[33px] shrink-0 bg-[#efefef] flex">
          <DocTab active w="w-[164px]" text="5#楼-N02~05-···" />
          <DocTab w="w-[233px]" text="结施-5-5#楼-P01~P07···" />
          <DocTab w="w-[233px]" text="结施-5-5#楼-P08~P11···" />
          <DocTab w="w-[232px]" text="结施-5-3#楼-板配筋···" />
        </div>
        <div className="flex-1 min-h-0">
          <DocCanvas />
        </div>
      </div>

      <div className="flex-1 flex flex-col min-w-0 font-['Noto_Sans_CJK_SC','Liberation_Sans',sans-serif]">
        <div className="h-[41px] flex shrink-0 bg-white">
          <div className="w-[52px] flex justify-center pt-[3px] pr-[6px]">
            <Svg w={32} h={30} vb="0 0 32 30">
              <defs>
                <linearGradient id="tl" x1="0" y1="0" x2="0" y2="1">
                  <stop offset="0" stopColor="#19a6f2" />
                  <stop offset="1" stopColor="#0f7fe0" />
                </linearGradient>
              </defs>
              <path d="M3 1h26c2 0 3 5-1 6l-7 0c-1 6-1 14-1 19 0 4-8 4-8-1 0-6 1-14 1-18H4C0 6 0 1 3 1z" fill="url(#tl)" />
            </Svg>
          </div>
          <div className="flex flex-col flex-1">
            <div className="h-[22px] flex items-center">
              {qIcons.map((q, i) => (
                <span key={i} className={"flex justify-center shrink-0 " + q.w}>{q.el}</span>
              ))}
            </div>
            <div className="h-[19px] flex">
              {appTabs.map(([t, w]) => (
                <span key={t} className={"flex items-center justify-center text-[12px] rounded-full shrink-0 " + w + " " + (t === "建模" ? "bg-[#1a90f5] text-white" : "text-[#3a3a3a]")}>{t}</span>
              ))}
            </div>
          </div>
        </div>
        <Ribbon />
        <div className="h-[26px] shrink-0 bg-[#f3f3f3] flex items-start pt-[2px] pl-[4px] gap-[3px] overflow-hidden">
          <Sel t="首层" />
          <Sel t="板" />
          <Sel t="板负筋" />
          <Sel t="C8-200" />
          <Sel t="分层板1" />
          <div className="flex items-center h-[21px] pl-[1px] gap-[4px] text-[12px] text-[#333333] whitespace-nowrap">
            <Radio />
            <span className="ml-[2px]">按梁布置</span>
            <Radio />
            <span className="ml-[2px]">按圈梁布置</span>
            <Radio />
            <span className="ml-[2px]">按连梁布置</span>
            <Radio />
          </div>
        </div>
        <div className="flex-1 flex min-h-0 bg-white">
          <Nav />
          <div className="w-[4px] shrink-0" />
          <CenterCol />
          <div className="w-[4px] shrink-0 pt-[372px]">
            <div className="h-[100px] bg-[#5a5a5a]" />
          </div>
          <div className="flex-1 min-w-0">
            <CadCanvas />
          </div>
        </div>
      </div>
      <Overlay />
    </div>
  );
}
